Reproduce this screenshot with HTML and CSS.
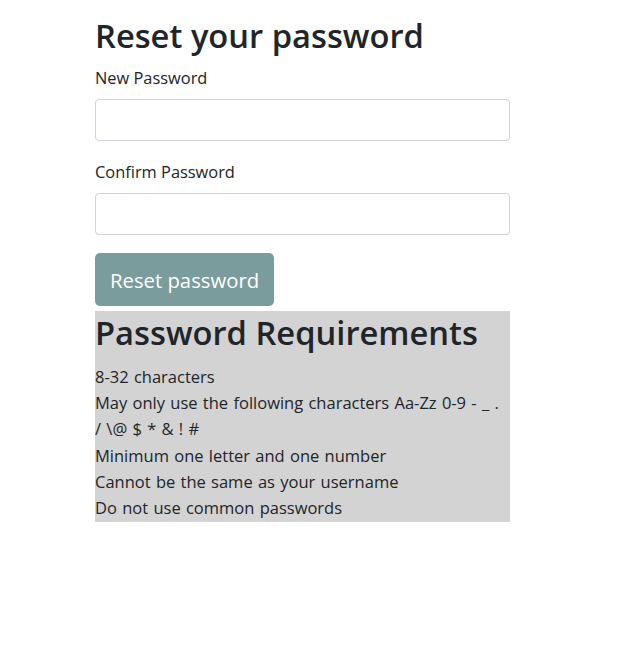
FILE: index.html
```html
<!DOCTYPE html>
<html lang="en">
<head>
<meta charset="utf-8">
<title>Reset your password</title>
<link rel="stylesheet" href="styles.css">
</head>
<body>
<main class="page">
  <h2 class="title">Reset your password</h2>
  <form class="form">
    <div class="form-group">
      <label class="label" for="pw1">New Password</label>
      <input class="input" id="pw1" type="password">
    </div>
    <div class="form-group">
      <label class="label" for="pw2">Confirm Password</label>
      <input class="input" id="pw2" type="password">
    </div>
    <button class="btn" type="button">Reset password</button>
  </form>
  <section class="reqs">
    <h2 class="reqs-title">Password Requirements</h2>
    <div class="req">8-32 characters</div>
    <div class="req">May only use the following characters Aa-Zz 0-9 - _ . / \@ $ * &amp; ! #</div>
    <div class="req">Minimum one letter and one number</div>
    <div class="req">Cannot be the same as your username</div>
    <div class="req">Do not use common passwords</div>
  </section>
</main>
</body>
</html>
```
FILE: styles.css
```css
* { box-sizing: border-box; }
body {
  margin: 0;
  font-family: "Open Sans", "Noto Sans", sans-serif;
  color: #212529;
  background: #fff;
}
.page {
  width: 415px;
  margin-left: 95px;
  padding-top: 17px;
}
.title {
  font-size: 32.7px;
  font-weight: 600;
  line-height: 38px;
  margin: 0 0 10px;
}
.form-group {
  margin-bottom: 18px;
}
.label {
  display: block;
  font-size: 16.4px;
  line-height: 26px;
  margin-bottom: 8px;
}
.input {
  display: block;
  width: 100%;
  height: 42px;
  border: 1px solid #ced4da;
  border-radius: 4px;
  background: #fff;
}
.btn {
  display: block;
  height: 53px;
  padding: 0 15px;
  border: 0;
  border-radius: 5px;
  background: #7a9c9c;
  color: #fff;
  font-family: inherit;
  font-size: 20.3px;
  margin: 0 0 5px;
}
.reqs {
  background: #d3d3d3;
  padding-bottom: 1px;
}
.reqs-title {
  font-size: 32.7px;
  font-weight: 600;
  line-height: 44px;
  margin: 0 0 9px;
}
.req {
  font-size: 16.5px;
  line-height: 26.2px;
  word-spacing: 1px;
}
```
